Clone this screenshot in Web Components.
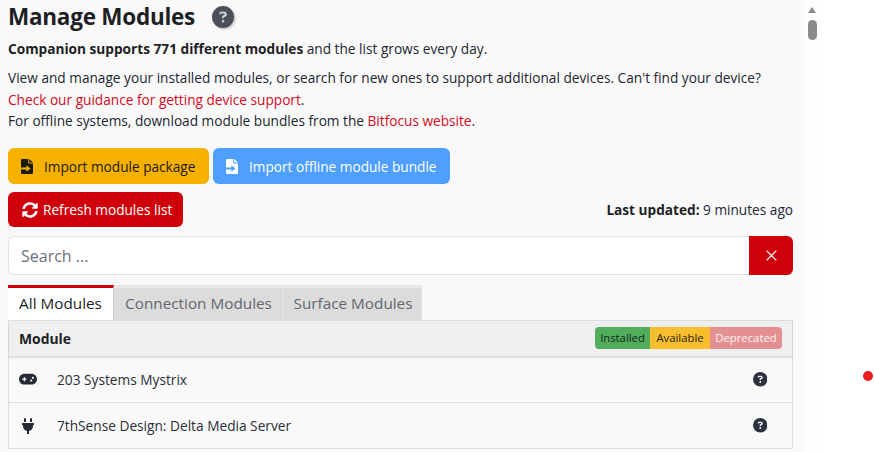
<!DOCTYPE html>
<html><head><meta charset="utf-8"><title>Manage Modules</title>
<style>
html,body{margin:0;padding:0;height:100%;overflow:hidden;background:#fff}
body{font-family:"Open Sans","Noto Sans",sans-serif;color:#212631;font-size:13.66px}
</style></head><body>
<app-shell></app-shell>
<template id="icons">
<svg id="q" viewBox="0 0 512 512"><path fill="currentColor" d="M256 512A256 256 0 1 0 256 0a256 256 0 1 0 0 512zM169.800 165.300c7.900-22.300 29.100-37.300 52.800-37.300h58.300c34.900 0 63.100 28.300 63.100 63.100c0 22.600-12.100 43.500-31.700 54.800L280 264.400c-.2 13-10.900 23.600-24 23.600c-13.300 0-24-10.700-24-24V250.500c0-8.600 4.600-16.500 12.100-20.800l44.300-25.400c4.700-2.700 7.600-7.700 7.600-13.100c0-8.400-6.800-15.100-15.100-15.100H222.600c-3.400 0-6.400 2.100-7.500 5.300l-.4 1.200c-4.400 12.500-18.200 19-30.600 14.600s-19-18.200-14.600-30.600l.4-1.200zM224 352a32 32 0 1 1 64 0 32 32 0 1 1 -64 0z"/></svg>
<svg id="sync" viewBox="0 0 512 512"><path fill="currentColor" d="M370.720 133.280C339.458 104.008 298.888 87.962 255.848 88c-77.458.068-144.328 53.178-162.791 126.850-1.344 5.363-6.122 9.150-11.651 9.150H24.103c-7.498 0-13.194-6.807-11.807-14.176C33.933 94.924 134.813 8 256 8c66.448 0 126.791 26.136 171.315 68.685L463.030 40.970C478.149 25.851 504 36.559 504 57.941V192c0 13.255-10.745 24-24 24H345.941c-21.382 0-32.090-25.851-16.971-40.971l41.750-41.749zM32 296h134.059c21.382 0 32.090 25.851 16.971 40.971l-41.750 41.750c31.262 29.273 71.835 45.319 114.876 45.280 77.418-.07 144.315-53.144 162.787-126.849 1.344-5.363 6.122-9.150 11.651-9.150h57.304c7.498 0 13.194 6.807 11.807 14.176C478.067 417.076 377.187 504 256 504c-66.448 0-126.791-26.136-171.315-68.685L48.970 471.030C33.851 486.149 8 475.441 8 454.059V320c0-13.255 10.745-24 24-24z"/></svg>
<svg id="file" viewBox="0 0 384 512" preserveAspectRatio="none"><path fill="currentColor" fill-rule="evenodd" d="M40 0H232V128a24 24 0 0 0 24 24H384V472a40 40 0 0 1-40 40H40a40 40 0 0 1-40-40V40A40 40 0 0 1 40 0zM0 292V356H170V410a12 12 0 0 0 20 8L296 332a12 12 0 0 0 0-16L190 230a12 12 0 0 0-20 8V292zM264 0L384 120H264z"/></svg>
<svg id="gamepad" viewBox="0 0 640 512"><path fill="currentColor" d="M192 64C86 64 0 150 0 256S86 448 192 448H448c106 0 192-86 192-192s-86-192-192-192H192zM496 168a40 40 0 1 1 0 80 40 40 0 1 1 0-80zM392 304a40 40 0 1 1 80 0 40 40 0 1 1 -80 0zM168 200c0-13.300 10.700-24 24-24s24 10.700 24 24v32h32c13.300 0 24 10.700 24 24s-10.700 24-24 24H216v32c0 13.300-10.700 24-24 24s-24-10.700-24-24V280H136c-13.300 0-24-10.700-24-24s10.700-24 24-24h32V200z"/></svg>
<svg id="plug" viewBox="0 0 384 512"><path fill="currentColor" d="M320,32a32,32,0,0,0-64,0v96h64Zm48,128H16A16,16,0,0,0,0,176v32a16,16,0,0,0,16,16H32v32A160.070,160.070,0,0,0,160,412.800V512h64V412.800A160.070,160.070,0,0,0,352,256V224h16a16,16,0,0,0,16-16V176A16,16,0,0,0,368,160ZM128,32a32,32,0,0,0-64,0v96h64Z"/></svg>
<svg id="x" viewBox="0 0 12 12"><path fill="none" stroke="currentColor" stroke-width="1.400" d="M.7 .7l10.600 10.600M11.300 .7L.7 11.300"/></svg>
</template>
<script>
const iconTpl=document.getElementById('icons');
class XIcon extends HTMLElement{
  constructor(){super();const r=this.attachShadow({mode:'open'});
    r.innerHTML='<style>:host{display:inline-flex;align-items:center;justify-content:center;line-height:0;flex:none}svg{display:block;width:100%;height:100%}</style>';
    const s=iconTpl.content.getElementById(this.getAttribute('name')).cloneNode(true);s.removeAttribute('id');r.appendChild(s);}
}
customElements.define('x-icon',XIcon);

class XButton extends HTMLElement{
  constructor(){super();this.attachShadow({mode:'open'}).innerHTML=`<style>
  :host{display:inline-flex;align-items:center;box-sizing:border-box;height:36px;border-radius:6px;padding:0 0 0 13px;font-size:13.650px;white-space:nowrap;background:var(--bg);color:var(--fg)}
  </style><slot></slot>`;}
}
customElements.define('x-button',XButton);

class PageHeader extends HTMLElement{
  constructor(){super();this.attachShadow({mode:'open'}).innerHTML=`<style>
  :host{display:block}
  .h{display:flex;align-items:center;height:34px;margin-bottom:4px}
  h1{margin:0;font-size:22.500px;font-weight:700;line-height:34px;color:#1d1f24;letter-spacing:-.25px}
  x-icon{width:22px;height:22px;margin-left:17px;color:#4a4f59;filter:drop-shadow(1px 1px 1px rgba(0,0,0,.3))}
  p{margin:0;line-height:21.500px}
  .a{margin-bottom:8px;line-height:21px}
  a{color:#d20a24;text-decoration:none}
  b{color:#1d1f24}
  </style>
  <div class="h"><h1>Manage Modules</h1><x-icon name="q"></x-icon></div>
  <p class="a"><b>Companion supports 771 different modules</b> and the list grows every day.</p>
  <p>View and manage your installed modules, or search for new ones to support additional devices. Can't find your device?<br>
  <a href="#">Check our guidance for getting device support</a>.<br>
  For offline systems, download module bundles from the <a href="#">Bitfocus website</a>.</p>`;}
}
customElements.define('page-header',PageHeader);

class ActionBar extends HTMLElement{
  constructor(){super();this.attachShadow({mode:'open'}).innerHTML=`<style>
  :host{display:block;margin-top:16.500px}
  .r{display:flex;gap:4px}
  .r2{margin-top:8px;justify-content:space-between;align-items:center}
  .g{width:201px;--bg:#f5b000;--fg:#1c1a0a}
  .b{width:237px;--bg:#4e9fff;--fg:#fff}
  .g span,.b span{margin-left:11px}
  .g x-icon,.b x-icon{width:12px;height:15px}
  .d{width:175px;height:35px;--bg:#d0000a;--fg:#fff;padding-left:14px}
  .d x-icon{width:16px;height:16px}
  .d span{margin-left:5px}
  .u{font-size:13.650px}
  b{color:#1d1f24}
  </style>
  <div class="r">
    <x-button class="g"><x-icon name="file"></x-icon><span>Import module package</span></x-button>
    <x-button class="b"><x-icon name="file"></x-icon><span>Import offline module bundle</span></x-button>
  </div>
  <div class="r r2">
    <x-button class="d"><x-icon name="sync"></x-icon><span>Refresh modules list</span></x-button>
    <div class="u"><b>Last updated:</b> 9 minutes ago</div>
  </div>`;}
}
customElements.define('action-bar',ActionBar);

class SearchBox extends HTMLElement{
  constructor(){super();this.attachShadow({mode:'open'}).innerHTML=`<style>
  :host{display:flex;height:39px;margin-top:9px;box-sizing:border-box}
  .i{flex:1;box-sizing:border-box;background:#fff;border:1px solid #dcdfe6;border-right:0;border-radius:6px 0 0 6px;padding:1px 0 0 12px;font-size:16px;line-height:37px;color:#6b7078}
  .x{width:44px;background:#d0000a;color:#fff;border-radius:0 6px 6px 0;display:flex;align-items:center;justify-content:center}
  x-icon{width:11px;height:11px}
  </style><div class="i">Search ...</div><div class="x"><x-icon name="x"></x-icon></div>`;}
}
customElements.define('search-box',SearchBox);

class TabBar extends HTMLElement{
  constructor(){super();this.attachShadow({mode:'open'}).innerHTML=`<style>
  :host{display:flex;margin-top:10px;height:35px;font-size:15.300px;line-height:1}
  div{box-sizing:border-box;display:flex;align-items:center;justify-content:center;background:#dcdcdc;color:#62666e;height:35px;border-top:3px solid #e7e7e7;padding-bottom:1px}
  .on{background:#fff;color:#1d1f24;border-top:3px solid #d0000a;border-right:1px solid #c8c8c8;width:106px}
  .c{width:169px}
  .s{width:139px;border-left:1px solid #e8e8e8}
  </style><div class="on">All Modules</div><div class="c">Connection Modules</div><div class="s">Surface Modules</div>`;}
}
customElements.define('tab-bar',TabBar);

class ModuleTable extends HTMLElement{
  constructor(){super();this.attachShadow({mode:'open'}).innerHTML=`<style>
  :host{display:block;box-sizing:border-box;border:solid #dedede;border-width:1px 1px 0 1px}
  .head{display:flex;align-items:center;justify-content:space-between;height:36px;box-sizing:border-box;background:#efefef;padding:0 10px 1px;border-bottom:1px solid #d9d9d9;box-shadow:0 1px 2px rgba(0,0,0,.12);position:relative}
  b{color:#1d1f24;font-size:13.900px}
  .pills{display:flex;font-size:11.300px;line-height:22px;border-radius:4px;overflow:hidden;height:22px}
  .pills span{text-align:center}
  .p1{background:#52ad5c;color:#0f2a18;width:55px}
  .p2{background:#f8be2e;color:#2a2208;width:60px}
  .p3{background:#e48f92;color:#fff3f2;width:72px}
  </style>
  <div class="head"><b>Module</b><div class="pills"><span class="p1">Installed</span><span class="p2">Available</span><span class="p3">Deprecated</span></div></div>
  <slot></slot>`;}
}
customElements.define('module-table',ModuleTable);

class ModuleRow extends HTMLElement{
  constructor(){super();const ic=this.getAttribute('icon');this.attachShadow({mode:'open'}).innerHTML=`<style>
  :host{display:flex;align-items:center;box-sizing:border-box;height:46px;border-bottom:1px solid #dedede;padding:0 25px 0 10px;font-size:13.700px}
  .ic{width:18px;color:#262a33;display:flex;justify-content:center}
  .gamepad{width:18px;height:14.400px}
  .plug{width:12px;height:16px}
  .t{flex:1;margin-left:20px;color:#2a2e38;padding-bottom:1px}
  .q{width:14.500px;height:14.500px;color:#2c3240}
  </style><div class="ic"><x-icon class="${ic}" name="${ic}"></x-icon></div><div class="t"><slot></slot></div><x-icon class="q" name="q"></x-icon>`;}
}
customElements.define('module-row',ModuleRow);

class FakeScroll extends HTMLElement{
  constructor(){super();this.attachShadow({mode:'open'}).innerHTML=`<style>
  :host{display:block;width:17px;background:#fdfdfd;flex:none;position:relative}
  .a{width:0;height:0;border:4.500px solid transparent;border-top:0;border-bottom:6px solid #8c8c8c;margin:7px 0 0 3px}
  .t{width:9px;height:20px;border-radius:5px;background:#8a8a8a;margin:7px 0 0 3px}
  </style><div class="a"></div><div class="t"></div>`;}
}
customElements.define('fake-scroll',FakeScroll);

class AppShell extends HTMLElement{
  constructor(){super();this.attachShadow({mode:'open'}).innerHTML=`<style>
  :host{display:flex;width:874px;height:452px;overflow:hidden;position:relative;background:#fff}
  .main{width:805px;flex:none;box-sizing:border-box;background:#f9f9f9;padding:0 12px 0 8px;overflow:hidden}
  .dot{position:absolute;left:863px;top:371px;width:10px;height:10px;border-radius:50%;background:#ee1c1c}
  </style>
  <div class="main">
    <page-header></page-header>
    <action-bar></action-bar>
    <search-box></search-box>
    <tab-bar></tab-bar>
    <module-table>
      <module-row icon="gamepad">203 Systems Mystrix</module-row>
      <module-row icon="plug">7thSense Design: Delta Media Server</module-row>
    </module-table>
  </div>
  <fake-scroll></fake-scroll>
  <div class="dot"></div>`;}
}
customElements.define('app-shell',AppShell);
</script>
</body></html>
